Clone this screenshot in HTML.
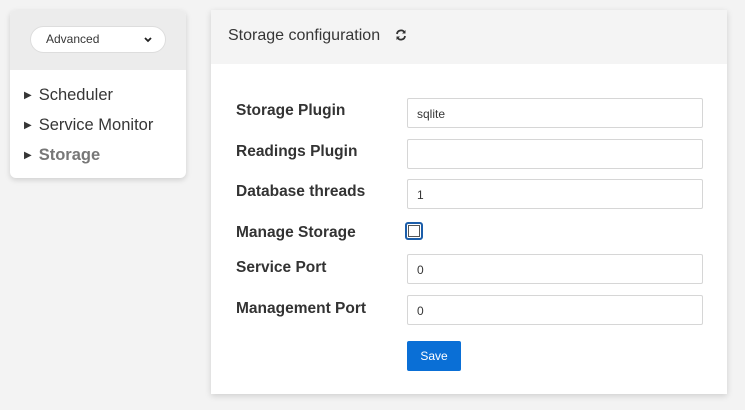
<!DOCTYPE html>
<html><head><style>
body{margin:0;width:745px;height:410px;background:#f3f3f3;font-family:"Liberation Sans",sans-serif;position:relative;overflow:hidden;color:#363636}
.side{position:absolute;left:10px;top:10px;width:176px;height:168px;background:#fff;border-radius:6px;box-shadow:0 2px 6px rgba(0,0,0,.15);overflow:hidden}
.side .hd{height:60px;background:#ececec;position:relative}
.sel{position:absolute;left:20px;top:16px;width:134px;height:25px;border:1px solid #ddd;border-radius:14px;background:#fff;font-size:12px;line-height:25px}
.sel span{position:absolute;left:15px}
.sel svg{position:absolute;right:13px;top:10px}
.it{position:absolute;left:14px;font-size:16.5px}
.it b{font-size:10px;font-weight:normal;margin-right:7px;position:relative;top:-2px}
.main{position:absolute;left:211px;top:10px;width:516px;height:384px;background:#fff;box-shadow:0 2px 6px rgba(0,0,0,.15)}
.main .hd{height:54px;background:#f4f4f4;font-size:16px;line-height:52px;padding-left:17px}
.lb{position:absolute;left:25px;font-size:15.5px;font-weight:bold;color:#333}
.in{position:absolute;left:196px;height:28px;border:1px solid #d6d6d6;border-radius:2px;font-size:12px;line-height:30px;padding-left:9px;width:285px}
.cb{position:absolute;left:194px;top:212px;width:14px;height:14px;border:2px solid #1c5eaa;border-radius:3px;box-shadow:inset 0 0 0 1px #fff, inset 0 0 0 2px #555}
.btn{position:absolute;left:196px;top:331px;width:54px;height:30px;background:#0a6fd6;color:#fff;font-size:12px;line-height:30px;text-align:center;border-radius:2px}
</style></head><body>
<div class="side"><div class="hd"><div class="sel"><span>Advanced</span><svg width="8" height="6" viewBox="0 0 8 6"><path d="M1 1l3 3 3-3" stroke="#222" stroke-width="1.8" fill="none"/></svg></div></div>
<div class="it" style="top:76px"><b>▶</b>Scheduler</div>
<div class="it" style="top:106px"><b>▶</b>Service Monitor</div>
<div class="it" style="top:136px;color:#777;font-weight:bold"><b style="color:#363636">▶</b>Storage</div>
</div>
<div class="main"><div class="hd">Storage configuration <svg width="12" height="12" viewBox="0 0 12 12" style="margin-left:10px;vertical-align:-1px"><path d="M2 5A4 4 0 0 1 9.5 3.5M10 7A4 4 0 0 1 2.5 8.5" stroke="#333" stroke-width="1.8" fill="none"/><path d="M10.5 1v3.5H7zM1.5 11V7.5H5z" fill="#333"/></svg></div>
<div class="lb" style="top:92px">Storage Plugin</div><div class="in" style="top:88px">sqlite</div>
<div class="lb" style="top:133px">Readings Plugin</div><div class="in" style="top:129px"></div>
<div class="lb" style="top:173px">Database threads</div><div class="in" style="top:169px">1</div>
<div class="lb" style="top:214px">Manage Storage</div><div class="cb"></div>
<div class="lb" style="top:249px">Service Port</div><div class="in" style="top:244px">0</div>
<div class="lb" style="top:290px">Management Port</div><div class="in" style="top:285px">0</div>
<div class="btn">Save</div>
</div>
</body></html>
